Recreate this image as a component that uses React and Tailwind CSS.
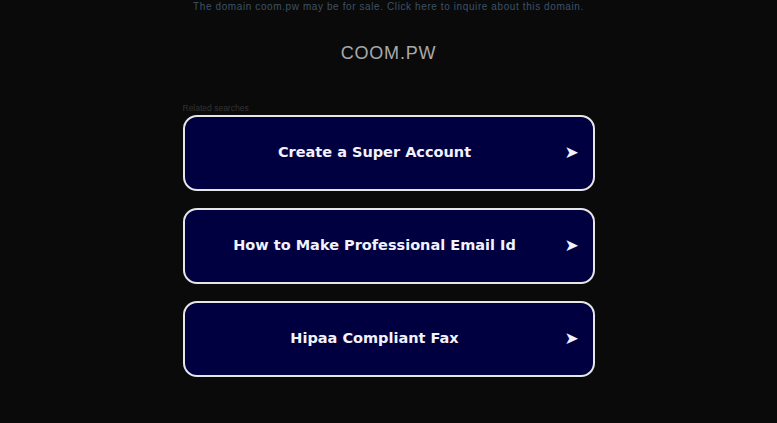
export default function App() {
  const links = ['Create a Super Account', 'How to Make Professional Email Id', 'Hipaa Compliant Fax'];

  return (
    <div className="min-h-[423px] w-full bg-[#0a0a0a] font-['Liberation_Sans',Arial,sans-serif]">
      <div className="text-center text-[10px] leading-[13px] tracking-[0.6px] text-[#3d5266]">
        The domain coom.pw may be for sale. Click here to inquire about this domain.
      </div>

      <div className="mt-[29px] text-center text-[18px] leading-[22px] tracking-[0.8px] text-[#a9a9a9]">
        COOM.PW
      </div>

      <div className="mx-auto mt-[39px] w-[412px]">
        <div className="text-[8.5px] leading-[10px] text-[#333333]">Related searches</div>
        <div className="mt-[2px] flex flex-col gap-[17px]">
          {links.map((t) => (
            <a
              key={t}
              href="#"
              className="flex h-[76px] items-center rounded-[14px] border-2 border-[#e6e6e6] bg-[#000040] font-['DejaVu_Sans',sans-serif] font-bold text-[#f2f2ff]"
            >
              <span className="flex-1 text-center text-[14.5px]">{t}</span>
              <span className="w-[28px] pr-[17px] text-right text-[17px]">➤</span>
            </a>
          ))}
        </div>
      </div>
    </div>
  );
}
